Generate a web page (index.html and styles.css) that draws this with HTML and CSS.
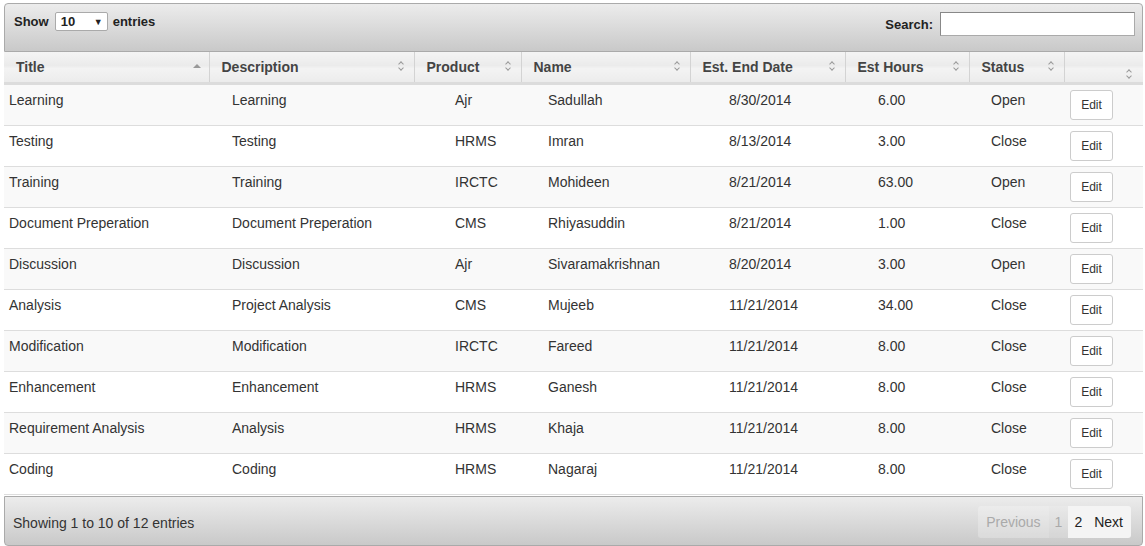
FILE: index.html
```html
<!DOCTYPE html>
<html lang="en">
<head>
    <meta charset="UTF-8">
    <title>Tasks</title>
    <link rel="stylesheet" href="styles.css">
</head>
<body>
    <div class="wrapper">
        <div class="toolbar top">
            <div class="length">
                Show
                <span class="select">10 <span class="caret">&#9660;</span></span>
                entries
            </div>
            <div class="filter">
                Search: <input type="text">
            </div>
        </div>

        <table class="head">
            <colgroup>
                <col style="width:205px"><col style="width:205px"><col style="width:107px"><col style="width:169px">
                <col style="width:155px"><col style="width:124px"><col style="width:95px"><col style="width:79px">
            </colgroup>
            <tr>
                <th>Title<span class="sort up"></span></th>
                <th>Description<span class="sort both"></span></th>
                <th>Product<span class="sort both"></span></th>
                <th>Name<span class="sort both"></span></th>
                <th>Est. End Date<span class="sort both"></span></th>
                <th>Est Hours<span class="sort both"></span></th>
                <th>Status<span class="sort both"></span></th>
                <th class="empty"><span class="sort both low"></span></th>
            </tr>
        </table>

        <table class="body">
            <colgroup>
                <col style="width:223px"><col style="width:223px"><col style="width:93px"><col style="width:181px">
                <col style="width:149px"><col style="width:113px"><col style="width:79px"><col style="width:78px">
            </colgroup>
            <tbody id="rows"></tbody>
        </table>

        <div class="toolbar bottom">
            <div class="info">Showing 1 to 10 of 12 entries</div>
            <div class="paging">
                <span class="btn disabled">Previous</span>
                <span class="btn current">1</span>
                <span class="btn page">2</span>
                <span class="btn page">Next</span>
            </div>
        </div>
    </div>

    <script>
        const tasks = [
            ["Learning", "Learning", "Ajr", "Sadullah", "8/30/2014", "6.00", "Open"],
            ["Testing", "Testing", "HRMS", "Imran", "8/13/2014", "3.00", "Close"],
            ["Training", "Training", "IRCTC", "Mohideen", "8/21/2014", "63.00", "Open"],
            ["Document Preperation", "Document Preperation", "CMS", "Rhiyasuddin", "8/21/2014", "1.00", "Close"],
            ["Discussion", "Discussion", "Ajr", "Sivaramakrishnan", "8/20/2014", "3.00", "Open"],
            ["Analysis", "Project Analysis", "CMS", "Mujeeb", "11/21/2014", "34.00", "Close"],
            ["Modification", "Modification", "IRCTC", "Fareed", "11/21/2014", "8.00", "Close"],
            ["Enhancement", "Enhancement", "HRMS", "Ganesh", "11/21/2014", "8.00", "Close"],
            ["Requirement Analysis", "Analysis", "HRMS", "Khaja", "11/21/2014", "8.00", "Close"],
            ["Coding", "Coding", "HRMS", "Nagaraj", "11/21/2014", "8.00", "Close"]
        ];

        const tbody = document.getElementById("rows");
        tasks.forEach((task, i) => {
            const tr = document.createElement("tr");
            tr.className = i % 2 === 0 ? "odd" : "even";
            task.forEach(value => {
                const td = document.createElement("td");
                td.textContent = value;
                tr.appendChild(td);
            });
            const action = document.createElement("td");
            action.innerHTML = '<button class="edit">Edit</button>';
            tr.appendChild(action);
            tbody.appendChild(tr);
        });
    </script>
</body>
</html>
```

FILE: styles.css
```css
body {
    margin: 3px 2px 0 4px;
    background: white;
    font-family: "Liberation Sans", Arial, sans-serif;
    font-size: 14px;
    color: #333;
}

.wrapper {
    width: 1139px;
}

.toolbar {
    display: flex;
    justify-content: space-between;
    background: linear-gradient(#ececec, #c9c9c9);
    border: 1px solid #aaa;
    color: #222;
}

.toolbar.top {
    height: 47px;
    border-radius: 4px 4px 0 0;
    align-items: flex-start;
}

.toolbar.bottom {
    height: 48px;
    border-radius: 0 0 4px 4px;
    align-items: center;
    margin-top: 1px;
}

.length {
    font-weight: bold;
    font-size: 13px;
    padding: 8px 0 0 9px;
    display: flex;
    align-items: center;
    gap: 5px;
}

.select {
    display: inline-flex;
    justify-content: space-between;
    align-items: center;
    width: 42px;
    height: 17px;
    padding: 0 4px 0 5px;
    margin-left: 1px;
    background: white;
    border: 1px solid #aaa;
    border-radius: 2px;
    font-size: 13px;
}

.caret {
    font-size: 9px;
    color: #222;
}

.filter {
    font-weight: bold;
    font-size: 13px;
    padding: 8px 7px 0 0;
    display: flex;
    align-items: center;
    gap: 7px;
}

.filter input {
    width: 189px;
    height: 20px;
    border: 1px solid #aaa;
    border-top-color: #888;
    border-left-color: #888;
    padding: 1px 2px;
    margin: 0;
}

table {
    border-collapse: collapse;
    table-layout: fixed;
    width: 1139px;
}

.head {
    border-bottom: 3px solid #dcdcdc;
}

.head th {
    position: relative;
    height: 29px;
    padding: 0 0 1px 12px;
    text-align: left;
    font-weight: bold;
    font-size: 14px;
    color: #444;
    background: linear-gradient(#f4f4f4, #ebebeb 45%, #f3f3f3 55%, #ececec);
    border-right: 1px solid #d3d3d3;
    border-bottom: 1px solid #c9c9c9;
}

.head th:last-child {
    border-right: none;
}

.sort {
    position: absolute;
    right: 9px;
    top: 9px;
    width: 7px;
    height: 10px;
}

.sort.up::before {
    content: "";
    position: absolute;
    top: 3px;
    left: 0;
    border-left: 4px solid transparent;
    border-right: 4px solid transparent;
    border-bottom: 4px solid #999;
}

.sort.both::before,
.sort.both::after {
    content: "";
    position: absolute;
    left: 1px;
    width: 3px;
    height: 3px;
    border-left: 1px solid #999;
    border-top: 1px solid #999;
}

.sort.both::before {
    top: 1px;
    transform: rotate(45deg);
}

.sort.both::after {
    top: 5px;
    transform: rotate(225deg);
}

.sort.low {
    top: 17px;
    right: 10px;
}

.body td {
    height: 41px;
    padding: 7px 0 0 5px;
    vertical-align: top;
    border-top: 1px solid #ddd;
    box-sizing: border-box;
}

.body tr:first-child td {
    height: 40px;
    border-top: none;
}

.body tr:last-child td {
    border-bottom: 1px solid #ddd;
}

.body tr.odd {
    background: #f9f9f9;
}

.body tr.even {
    background: white;
}

.body td:last-child {
    padding-top: 5px;
}

.edit {
    width: 43px;
    height: 30px;
    background: white;
    border: 1px solid #ccc;
    border-radius: 3px;
    font-family: "Liberation Sans", Arial, sans-serif;
    font-size: 12px;
    color: #333;
    padding: 0;
}

.info {
    padding-left: 8px;
    padding-top: 4px;
    color: #333;
}

.paging {
    display: flex;
    margin-right: 11px;
    margin-top: 2px;
    height: 32px;
}

.btn {
    display: flex;
    align-items: center;
    padding: 0 6px;
    font-size: 14px;
}

.btn.disabled {
    padding: 0 8px 0 8px;
    color: #aaa;
    background: rgba(255, 255, 255, 0.25);
    border-radius: 3px 0 0 3px;
}

.btn.current {
    color: #aaa;
    background: rgba(255, 255, 255, 0.15);
}

.btn.page {
    background: #f4f4f4;
    color: #222;
}

.btn.page:last-child {
    padding-right: 8px;
    border-radius: 0 3px 3px 0;
}
```
